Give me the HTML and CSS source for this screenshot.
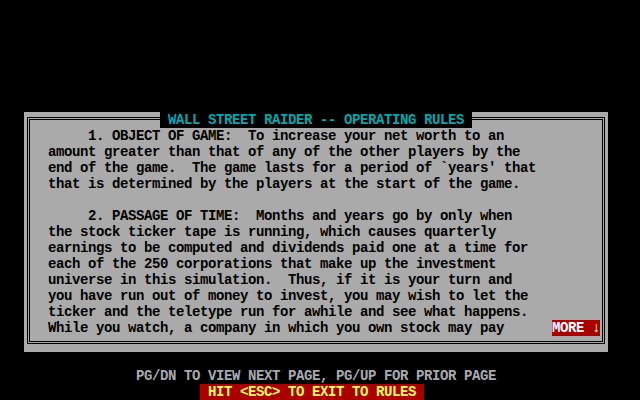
FILE: index.html
```html
<!DOCTYPE html>
<html>
<head>
<meta charset="utf-8">
<link rel="stylesheet" href="styles.css">
</head>
<body>
<div class="screen">
  <div class="top-space"></div>
  <div class="panel">
    <div class="title"> WALL STREET RAIDER -- OPERATING RULES </div>
    <div class="frame">
      <div class="text">
        <div class="line">     1. OBJECT OF GAME:  To increase your net worth to an</div>
        <div class="line">amount greater than that of any of the other players by the</div>
        <div class="line">end of the game.  The game lasts for a period of `years' that</div>
        <div class="line">that is determined by the players at the start of the game.</div>
        <div class="line"> </div>
        <div class="line">     2. PASSAGE OF TIME:  Months and years go by only when</div>
        <div class="line">the stock ticker tape is running, which causes quarterly</div>
        <div class="line">earnings to be computed and dividends paid one at a time for</div>
        <div class="line">each of the 250 corporations that make up the investment</div>
        <div class="line">universe in this simulation.  Thus, if it is your turn and</div>
        <div class="line">you have run out of money to invest, you may wish to let the</div>
        <div class="line">ticker and the teletype run for awhile and see what happens.</div>
        <div class="line">While you watch, a company in which you own stock may pay      <span class="more">MORE ↓</span></div>
      </div>
    </div>
  </div>
  <div class="row"></div>
  <div class="row hint">PG/DN TO VIEW NEXT PAGE, PG/UP FOR PRIOR PAGE</div>
  <div class="row esc-row"><span class="esc"> HIT &lt;ESC&gt; TO EXIT TO RULES </span></div>
</div>
</body>
</html>
```
FILE: styles.css
```css
html, body {
  margin: 0;
  padding: 0;
  background: #000;
}
.screen {
  width: 640px;
  height: 400px;
  overflow: hidden;
  background: #000;
  font-family: "Liberation Mono", "DejaVu Sans Mono", monospace;
  font-size: 14px;
  letter-spacing: -0.4px;
  font-weight: bold;
  line-height: 16px;
}
.top-space {
  height: 112px;
}
.panel {
  position: relative;
  margin-left: 24px;
  width: 584px;
  height: 240px;
  background: #aaaaaa;
  overflow: hidden;
}
.title {
  position: absolute;
  left: 136px;
  top: 0;
  height: 16px;
  background: #000;
  color: #00aaaa;
  white-space: pre;
}
.frame {
  margin: 5px 3px 8px 3px;
  border: 3px double #000;
  height: 221px;
}
.text {
  padding-top: 8px;
  padding-left: 18px;
  color: #000;
}
.line {
  height: 16px;
  white-space: pre;
}
.more {
  background: #aa0000;
  color: #ffffff;
}
.row {
  height: 16px;
  white-space: pre;
}
.hint {
  padding-left: 136px;
  color: #aaaaaa;
}
.esc-row {
  padding-left: 200px;
}
.esc {
  background: #aa0000;
  color: #ffff55;
}
```
